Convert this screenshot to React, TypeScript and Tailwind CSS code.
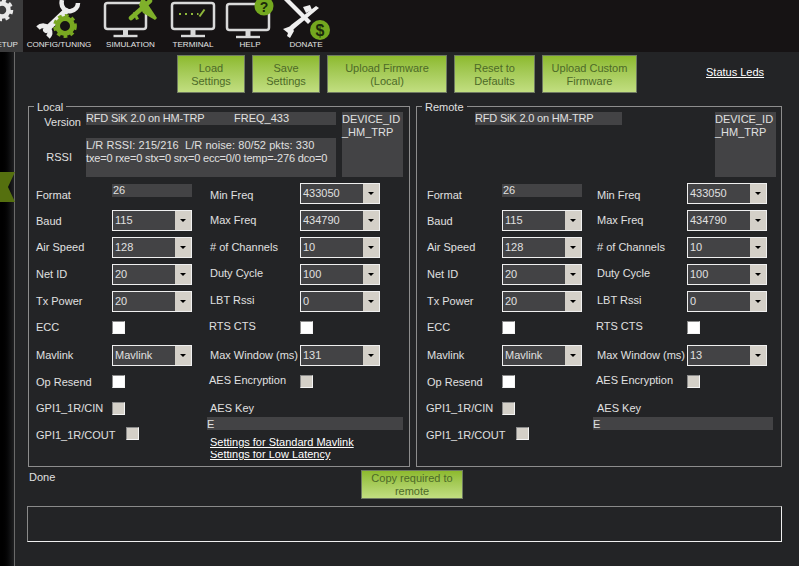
import React from "react";

const font = { fontFamily: '"Liberation Sans", Arial, sans-serif' };

function NavItem({ w, label, x, active, children, labelClass }: { w: string; label: string; x: number; active?: boolean; children: React.ReactNode; labelClass?: string }) {
  const width = parseInt(w.replace(/\D/g, ""), 10);
  return (
    <div className={`${w} h-full flex flex-col items-center overflow-hidden shrink-0 ${active ? "bg-[#3b3b3c]" : ""}`}>
      <svg width={width} height={40} viewBox={`${x} 0 ${width} 40`} className="shrink-0 block">
        {children}
      </svg>
      <div className={`text-[8.1px] leading-[10px] whitespace-nowrap text-[#e4e4e4] ${labelClass ?? ""}`}>{label}</div>
    </div>
  );
}

function Monitor({ x, w, y = 3, h = 26 }: { x: number; w: number; y?: number; h?: number }) {
  const c = x + w / 2;
  return (
    <g fill="none" stroke="#d9d9d9">
      <rect x={x} y={y} width={w} height={h} rx={2.5} strokeWidth={2.5} />
      <path d={`M${c} ${y + h} V${y + h + 6}`} strokeWidth={5} />
      <path d={`M${c - 12} ${y + h + 7} H${c + 12}`} strokeWidth={2.4} />
    </g>
  );
}

function TopBar() {
  return (
    <div className="h-[52px] shrink-0 flex bg-[#161314]">
      <NavItem w="w-[23px]" label="SETUP" x={0} active labelClass="self-end mr-[5px] shrink-0">
        <circle cx={2} cy={10} r={6.5} fill="none" stroke="#e8e8e8" strokeWidth={4.5} />
        <circle cx={2} cy={10} r={9.5} fill="none" stroke="#e8e8e8" strokeWidth={3.5} strokeDasharray="4 3.4" />
      </NavItem>
      <NavItem w="w-[72px]" label="CONFIG/TUNING" x={23}>
        <path d="M46 30 L66 11" stroke="#ececec" strokeWidth={6} strokeLinecap="round" />
        <path d="M62 0 C60 8 66 12 71 11 C75 10 78 7 78 3" fill="none" stroke="#ececec" strokeWidth={4.5} />
        <path d="M38 28 C41 25 47 25 49 29 C51 33 50 35 48 37" fill="none" stroke="#ececec" strokeWidth={5} />
        <circle cx={65} cy={26} r={7.5} fill="none" stroke="#79a821" strokeWidth={5} />
        <circle cx={65} cy={26} r={10.5} fill="none" stroke="#79a821" strokeWidth={2.8} strokeDasharray="3.8 3.2" />
      </NavItem>
      <NavItem w="w-[71px]" label="SIMULATION" x={95}>
        <Monitor x={105} w={41} />
        <path d="M131 18 L150 1" stroke="#7fb02a" strokeWidth={4.500} strokeLinecap="round" />
        <path d="M141 0 L145 0 L157 18 L155 20 L143 13 L139 5 Z" fill="#7fb02a" />
        <path d="M133 12 L136 13 L139 19 L136 20 Z" fill="#7fb02a" />
      </NavItem>
      <NavItem w="w-[54px]" label="TERMINAL" x={166}>
        <Monitor x={172} w={42} />
        <path d="M179 14 h2 M185 14 h2 M191 14 h2 M197 14 h1.500" stroke="#8fb83a" strokeWidth={2} />
        <path d="M199.500 16.500 L204.500 9.500" stroke="#8fb83a" strokeWidth={2} />
      </NavItem>
      <NavItem w="w-[60px]" label="HELP" x={220}>
        <Monitor x={227} w={42} y={4} />
        <circle cx={264} cy={6} r={9.5} fill="#74a81f" />
        <text x={264} y={11.500} textAnchor="middle" fontSize={14} fontWeight={700} fill="#1b2a0a" fontFamily="Liberation Sans">?</text>
      </NavItem>
      <NavItem w="w-[52px]" label="DONATE" x={280}>
        <path d="M284 0 L290 0 L311 21 L308 24 Z" fill="#efefef" />
        <path d="M316 6 L319 8 L295 28 L290 33 L287 30 L291 25 Z" fill="#efefef" />
        <path d="M283 29 L291 26 L294 31 L290 38 L287 36 L288 33 Z" fill="#efefef" />
        <path d="M303 7 L310 5 L312 10 L306 13 Z" fill="#efefef" />
        <circle cx={320} cy={30} r={10} fill="#74a81f" />
        <text x={320} y={36} textAnchor="middle" fontSize={16} fontWeight={700} fill="#1b2a0a" fontFamily="Liberation Sans">$</text>
      </NavItem>
    </div>
  );
}

function GreenButton({ w, h = "h-[38px]", lines }: { w: string; h?: string; lines: string[] }) {
  return (
    <button className={`${w} ${h} shrink-0 pt-[1px] border border-[#6f7a62] bg-gradient-to-b from-[#8dba2c] to-[#c2de80] text-[#4d6a28] text-[11px] leading-[13px] text-center`}>
      {lines.map((l) => (
        <div key={l}>{l}</div>
      ))}
    </button>
  );
}

function Combo({ value, w = "w-[80px]" }: { value: string; w?: string }) {
  return (
    <div className={`${w} h-[21px] border border-[#f0f0f0] bg-[#434345] flex items-stretch shrink-0`}>
      <div className="flex-1 pl-[2px] text-[11px] leading-[19px] text-[#e0e0e0] overflow-hidden">{value}</div>
      <div className="w-[16px] bg-[#d4d0c8] flex items-center justify-center">
        <div className="w-0 h-0 border-x-[3px] border-x-transparent border-t-[3px] border-t-black" />
      </div>
    </div>
  );
}

function Check({ on = false, mt = "mt-[3px]" }: { on?: boolean; mt?: string }) {
  return (
    <div className={`w-[13px] h-[13px] shrink-0 border-t border-l border-t-[#8a8a8a] border-l-[#8a8a8a] border-r border-b border-r-[#f4f4f4] border-b-[#f4f4f4] ${mt} ${on ? "bg-white" : "bg-[#d4d0c8]"}`} />
  );
}

function Field({ label, w, pl, lift = "", children }: { label: string; w: string; pl: string; lift?: string; children: React.ReactNode }) {
  return (
    <div className="h-[27px] flex items-start">
      <div className={`${w} ${pl} ${lift} shrink-0 text-[11px] leading-[24px] whitespace-nowrap text-[#e0e0e0]`}>{label}</div>
      {children}
    </div>
  );
}

function Gray({ className, children }: { className: string; children?: React.ReactNode }) {
  return <div className={`bg-[#434345] text-[11px] leading-[13px] text-[#e0e0e0] whitespace-pre shrink-0 ${className}`}>{children}</div>;
}

function Panel({ remote }: { remote?: boolean }) {
  const lw = remote ? "w-[85px]" : "w-[83px]";
  const lp = remote ? "pl-[10px]" : "pl-[7px]";
  const gp = remote ? "pl-[9px]" : "pl-[7px]";
  const lcol = remote ? "w-[180px]" : "w-[181px]";
  return (
    <div className={`relative ${remote ? "w-[366px] ml-[6px]" : "w-[382px]"} h-[361px] border border-[#8d8d8d] pt-[5px] shrink-0`}>
      <div className="absolute -top-[6px] left-[5px] px-[3px] bg-[#232426] text-[11px] leading-[13px] text-[#e0e0e0]">{remote ? "Remote" : "Local"}</div>
      <div className="h-[71px] flex items-start">
        {remote ? (
          <>
            <Gray className="ml-[58px] w-[147px] h-[13px] tracking-[-0.18px]">RFD SiK 2.0 on HM-TRP</Gray>
            <Gray className="ml-[93px] w-[61px] h-[65px] pt-px">{"DEVICE_ID\n_HM_TRP"}</Gray>
          </>
        ) : (
          <>
            <div className="flex flex-col">
              <div className="flex h-[13px]">
                <div className="w-[57px] pr-[5px] text-right text-[11px] leading-[20px] text-[#e0e0e0]">Version</div>
                <Gray className="w-[250px] h-[13px] flex">
                  <span className="w-[148px] tracking-[-0.18px]">RFD SiK 2.0 on HM-TRP</span>
                  <span>FREQ_433</span>
                </Gray>
              </div>
              <div className="flex mt-[13px] h-[39px] items-center">
                <div className="w-[57px] pr-[14px] text-right text-[11px] text-[#e0e0e0]">RSSI</div>
                <Gray className="w-[250px] h-[39px] pt-px">
                  <div className="tracking-[0.06px]">L/R RSSI: 215/216  L/R noise: 80/52 pkts: 330</div>
                  <div className="tracking-[-0.17px]">txe=0 rxe=0 stx=0 srx=0 ecc=0/0 temp=-276 dco=0</div>
                </Gray>
              </div>
            </div>
            <Gray className="ml-[6px] w-[61px] h-[65px] pt-px">{"DEVICE_ID\n_HM_TRP"}</Gray>
          </>
        )}
      </div>
      <div className="flex">
        <div className={`${lcol} shrink-0 flex flex-col`}>
          <Field label="Format" w={lw} pl={lp}><Gray className="w-[80px] h-[13px] mt-px pl-[1px]">26</Gray></Field>
          <Field label="Baud" w={lw} pl={lp} lift="-mt-px"><Combo value="115" /></Field>
          <Field label="Air Speed" w={lw} pl={lp} lift="-mt-[2px]"><Combo value="128" /></Field>
          <Field label="Net ID" w={lw} pl={lp} lift="-mt-[2px]"><Combo value="20" /></Field>
          <Field label="Tx Power" w={lw} pl={lp} lift="-mt-[2px]"><Combo value="20" /></Field>
          <Field label="ECC" w={lw} pl={lp} lift="-mt-[3px]"><Check on /></Field>
          <Field label="Mavlink" w={lw} pl={lp} lift="-mt-[2px]"><Combo value="Mavlink" /></Field>
          <Field label="Op Resend" w={lw} pl={lp} lift="-mt-[2px]"><Check on /></Field>
          <Field label="GPI1_1R/CIN" w={lw} pl={gp} lift="-mt-[3px]"><Check /></Field>
          <Field label={"GPI1_1R/COUT"} w={remote ? "w-[99px]" : "w-[97px]"} pl={gp} lift="-mt-[3px]"><Check mt="mt-px" /></Field>
        </div>
        <div className="flex flex-col">
          <Field label="Min Freq" w="w-[90px]" pl="pl-0"><Combo value="433050" /></Field>
          <Field label="Max Freq" w="w-[90px]" pl="pl-0" lift="-mt-[2px]"><Combo value="434790" /></Field>
          <Field label="# of Channels" w="w-[90px]" pl="pl-0" lift="-mt-[2px]"><Combo value="10" /></Field>
          <Field label="Duty Cycle" w="w-[90px]" pl="pl-0" lift="-mt-[3px]"><Combo value="100" /></Field>
          <Field label="LBT Rssi" w="w-[90px]" pl="pl-0" lift="-mt-[3px]"><Combo value="0" /></Field>
          <Field label="RTS CTS" w="w-[91px]" pl="pl-0" lift="-mt-[4px] -ml-px"><Check on /></Field>
          <Field label="Max Window (ms)" w="w-[90px]" pl="pl-0" lift="-mt-[2px]"><Combo value={remote ? "13" : "131"} /></Field>
          <Field label="AES Encryption" w="w-[91px]" pl="pl-0" lift="-mt-[4px] -ml-px"><Check /></Field>
          <div className="h-[18px] text-[11px] leading-[18px] text-[#e0e0e0]">AES Key</div>
          <Gray className={`${remote ? "w-[180px] -ml-[4px]" : "w-[196px] -ml-[3px]"} h-[13px] !leading-[14px]`}>E</Gray>
          {!remote && (
            <div className="mt-[6px] text-[11px] text-white underline">
              <div className="h-[13px] leading-[13px]">Settings for Standard Mavlink</div>
              <div className="mt-[2px] h-[10px] leading-[13px] overflow-hidden flex items-end">Settings for Low Latency</div>
            </div>
          )}
        </div>
      </div>
    </div>
  );
}

export default function App() {
  return (
    <div className="relative w-[799px] h-[566px] overflow-hidden bg-[#232426] flex flex-col" style={font}>
      <TopBar />
      <div className="flex flex-1 min-h-0">
        <div className="w-[15px] shrink-0 bg-gradient-to-r from-black to-[#1f2022] border-r border-r-[#6a6a6a]" />
        <div className="flex-1 flex flex-col">
          <div className="flex items-start gap-[7px] pl-[162px] pt-[3px] h-[54px]">
            <GreenButton w="w-[68px]" lines={["Load", "Settings"]} />
            <GreenButton w="w-[68px]" lines={["Save", "Settings"]} />
            <GreenButton w="w-[120px]" lines={["Upload Firmware", "(Local)"]} />
            <GreenButton w="w-[81px]" lines={["Reset to", "Defaults"]} />
            <GreenButton w="w-[95px]" lines={["Upload Custom", "Firmware"]} />
            <div className="ml-[62px] mt-[9px] text-[11px] text-white underline whitespace-nowrap">Status Leds</div>
          </div>
          <div className="flex pl-[13px]">
            <Panel />
            <Panel remote />
          </div>
          <div className="flex pl-[14px] h-[39px]">
            <div className="w-[40px] text-[11px] leading-[21px] text-[#e0e0e0]">Done</div>
            <div className="ml-[292px] mt-[3px]">
              <GreenButton w="w-[102px]" h="h-[29px]" lines={["Copy required to", "remote"]} />
            </div>
          </div>
          <div className="ml-[12px] w-[755px] h-[36px] border border-t-[#8a8a8a] border-l-[#8a8a8a] border-r-[#f0f0f0] border-b-[#f0f0f0]" />
        </div>
      </div>
      <svg width={15} height={30} viewBox="0 0 15 30" className="absolute left-0 top-[172px]">
        <path d="M0 0 H15 L8 15 L15 30 H0 Z" fill="#55700f" />
      </svg>
    </div>
  );
}
